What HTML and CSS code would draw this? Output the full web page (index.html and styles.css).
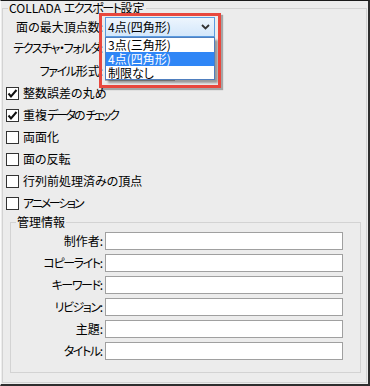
FILE: index.html
```html
<!DOCTYPE html>
<html lang="ja">
<head>
<meta charset="utf-8">
<link rel="stylesheet" href="styles.css">
</head>
<body>
<div class="frame">
  <fieldset class="group">
    <legend class="legend">COLLADA <span class="k">エクスポート</span>設定</legend>
    <div class="row r1">
      <span class="lbl">面の最大頂点数:</span>
      <div class="combo hot">
        <span class="combo-text">4点(四角形)</span>
        <svg class="chev" width="9" height="6" viewBox="0 0 9 6"><path d="M1 1 L4.5 4.5 L8 1" fill="none" stroke="#333" stroke-width="1.8"/></svg>
      </div>
    </div>
    <div class="row r2">
      <span class="lbl"><span class="k">テクスチャ・フォルダ</span>:</span>
      <div class="field"></div>
    </div>
    <div class="row r3">
      <span class="lbl"><span class="k">ファイル</span>形式:</span>
      <div class="combo small"></div>
    </div>
    <div class="checks">
      <div class="check"><span class="box"><svg width="11" height="11" viewBox="0 0 11 11"><path d="M1.5 5.5 L4 8.5 L9.5 2" fill="none" stroke="#111" stroke-width="2"/></svg></span><span>整数誤差の丸め</span></div>
      <div class="check"><span class="box"><svg width="11" height="11" viewBox="0 0 11 11"><path d="M1.5 5.5 L4 8.5 L9.5 2" fill="none" stroke="#111" stroke-width="2"/></svg></span><span>重複<span class="k2">データ</span>の<span class="k2">チェック</span></span></div>
      <div class="check"><span class="box"></span><span>両面化</span></div>
      <div class="check"><span class="box"></span><span>面の反転</span></div>
      <div class="check"><span class="box"></span><span>行列前処理済みの頂点</span></div>
      <div class="check"><span class="box"></span><span class="k2">アニメーション</span></div>
    </div>
    <fieldset class="group inner">
      <legend class="legend">管理情報</legend>
      <div class="form">
        <span class="flbl">制作者:</span><div class="input"></div>
        <span class="flbl"><span class="k">コピーライト</span>:</span><div class="input"></div>
        <span class="flbl"><span class="k">キーワード</span>:</span><div class="input"></div>
        <span class="flbl"><span class="k">リビジョン</span>:</span><div class="input"></div>
        <span class="flbl">主題:</span><div class="input"></div>
        <span class="flbl"><span class="k">タイトル</span>:</span><div class="input"></div>
      </div>
    </fieldset>
  </fieldset>
  <div class="droplist">
    <div class="opt">3点(三角形)</div>
    <div class="opt sel">4点(四角形)</div>
    <div class="opt">制限なし</div>
  </div>
  <div class="highlight"></div>
</div>
</body>
</html>
```
FILE: styles.css
```css
html, body {
  margin: 0;
  padding: 0;
  background: #ececec;
}
body {
  font-family: "Noto Sans CJK JP", sans-serif;
  font-size: 12px;
  font-feature-settings: "palt";
  color: #000;
}
.k {
  letter-spacing: -1.4px;
}
.k2 {
  letter-spacing: -2.2px;
}
.frame {
  position: relative;
  width: 370px;
  height: 386px;
  box-sizing: border-box;
  border-top: 1px solid #1a1a1a;
  border-right: 2px solid #2e2e2e;
  border-bottom: 2px solid #2e2e2e;
  border-left: 1px solid #fbfbfb;
  padding: 0 1px 1px 1px;
  background: #ececec;
}
.group {
  margin: 0;
  padding: 0;
  border: 1px solid #d3d3d3;
  min-width: 0;
  height: 100%;
  box-sizing: border-box;
}
.legend {
  margin-left: 5px;
  padding: 0 1px;
  line-height: 14px;
  height: 14px;
}
.row {
  display: flex;
  align-items: center;
  height: 20px;
}
.r1 { margin-top: 2px; }
.r2 { margin-top: 1px; }
.r3 { margin-top: 3px; }
.lbl {
  flex: none;
  width: 100px;
  text-align: right;
  white-space: nowrap;
  line-height: 14px;
}
.combo {
  margin-left: 2px;
  width: 110px;
  height: 20px;
  box-sizing: border-box;
  border: 1px solid #adadad;
  background: linear-gradient(#f2f2f2, #e2e2e2);
  display: flex;
  align-items: center;
  justify-content: space-between;
}
.combo.hot {
  border-color: #5a9be0;
  background: linear-gradient(#edf5fd, #d3e7fb);
}
.combo.small {
  width: 70px;
  height: 19px;
}
.combo-text {
  padding-left: 2px;
  line-height: 14px;
}
.chev {
  margin-right: 4px;
}
.field {
  margin-left: 2px;
  width: 70px;
  height: 18px;
  box-sizing: border-box;
  border: 1px solid #a0a0a0;
  background: #fff;
}
.checks {
  padding-top: 1px;
}
.check {
  display: flex;
  align-items: center;
  height: 22px;
  padding-left: 3px;
  line-height: 14px;
}
.box {
  flex: none;
  width: 13px;
  height: 13px;
  box-sizing: border-box;
  border: 1px solid #333;
  background: #fff;
  margin-right: 4px;
  display: flex;
  align-items: center;
  justify-content: center;
}
.box svg { display: block; }
.inner {
  height: auto;
  margin: 1px 5px 0 7px;
  padding: 0 0 12px 0;
}
.form {
  display: grid;
  grid-template-columns: 92px 238px;
  column-gap: 2px;
  row-gap: 4px;
  padding-top: 3px;
}
.flbl {
  text-align: right;
  line-height: 18px;
  white-space: nowrap;
}
.input {
  height: 18px;
  box-sizing: border-box;
  border: 1px solid #a0a0a0;
  background: #fff;
}
.droplist {
  position: absolute;
  left: 104px;
  top: 36px;
  width: 110px;
  height: 43px;
  box-sizing: border-box;
  border: 1px solid #4f7fbf;
  background: #fff;
  box-shadow: 3px 3px 2px rgba(0, 0, 0, 0.35);
}
.opt {
  height: 14px;
  line-height: 14px;
  padding-left: 2px;
  white-space: nowrap;
}
.opt.sel {
  background: #2f86f6;
  color: #fff;
}
.highlight {
  position: absolute;
  left: 98px;
  top: 12px;
  width: 122px;
  height: 75px;
  box-sizing: border-box;
  border: 3px solid #e8473d;
  box-shadow: 2px 2px 1px rgba(0, 0, 0, 0.3);
}
```
